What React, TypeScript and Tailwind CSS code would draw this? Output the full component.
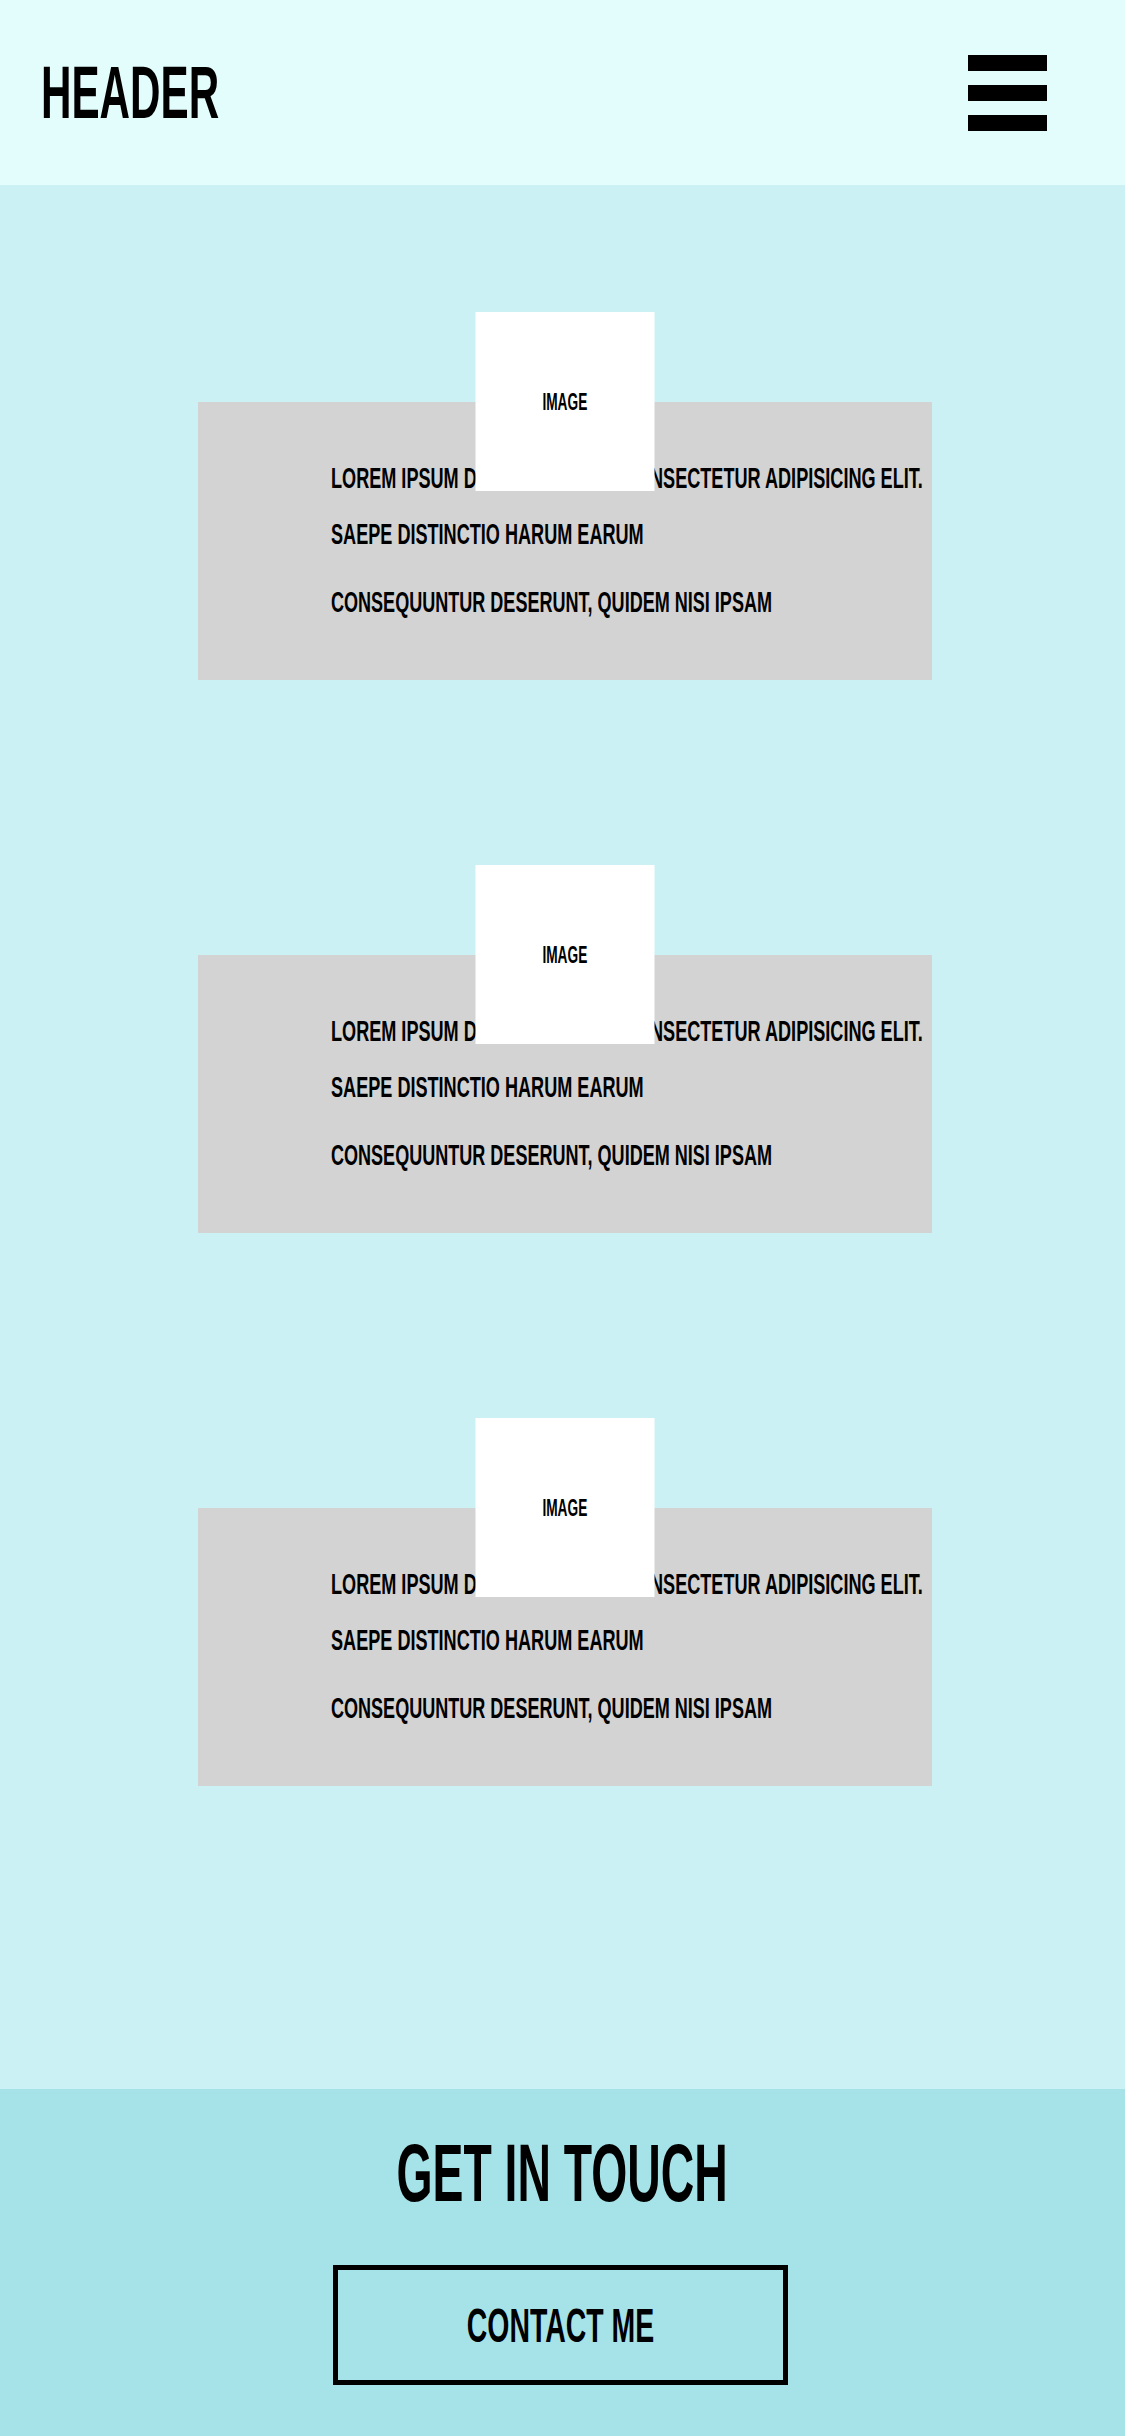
import React from 'react';

const cards = [1, 2, 3];

// condensed display face is not installed, so Liberation Sans Bold is squeezed with scale-x
function Card() {
  return (
    <div className="relative ml-[198px] w-[734px] h-[278px] bg-[#d3d3d3] pl-[133px] pt-[48px]">
      {/* image placeholder sits half above the box */}
      <div className="absolute left-1/2 -translate-x-1/2 -top-[90px] w-[179px] h-[179px] bg-white flex items-center justify-center z-10">
        <span className="inline-block text-[24px] leading-none font-bold scale-x-[0.57]">IMAGE</span>
      </div>
      <p className="text-[29px] leading-[56px] font-bold whitespace-nowrap origin-left scale-x-[0.624]">
        LOREM IPSUM DOLOR SIT AMET CONSECTETUR ADIPISICING ELIT.
        <br />
        SAEPE DISTINCTIO HARUM EARUM
      </p>
      <p className="mt-[12px] text-[29px] leading-[56px] font-bold whitespace-nowrap origin-left scale-x-[0.622]">
        CONSEQUUNTUR DESERUNT, QUIDEM NISI IPSAM
      </p>
    </div>
  );
}

export default function App() {
  return (
    <div className="w-[1125px] min-h-[2436px] text-black font-['Liberation_Sans',Arial,sans-serif]">
      <header className="h-[185px] bg-[#e3fdfd] flex items-center justify-between pl-[41px] pr-[78px]">
        <h1 className="text-[74px] leading-none font-bold origin-left scale-x-[0.57]">HEADER</h1>
        <div className="flex flex-col gap-[14px] w-[79px]">
          <span className="block h-[16px] bg-black" />
          <span className="block h-[16px] bg-black" />
          <span className="block h-[16px] bg-black" />
        </div>
      </header>

      <main className="bg-[#cbf1f5] pt-[217px] pb-[303px] flex flex-col gap-[275px] overflow-hidden">
        {cards.map((c) => (
          <Card key={c} />
        ))}
      </main>

      <footer className="h-[347px] bg-[#a6e3e9] flex flex-col items-center pt-[43px]">
        <h2 className="text-[82px] leading-none font-bold scale-x-[0.565]">GET IN TOUCH</h2>
        <button
          type="button"
          className="mt-[51px] -ml-[5px] w-[455px] h-[120px] border-[5px] border-black flex items-center justify-center"
        >
          <span className="inline-block text-[49px] leading-none font-bold scale-x-[0.58]">CONTACT ME</span>
        </button>
      </footer>
    </div>
  );
}
